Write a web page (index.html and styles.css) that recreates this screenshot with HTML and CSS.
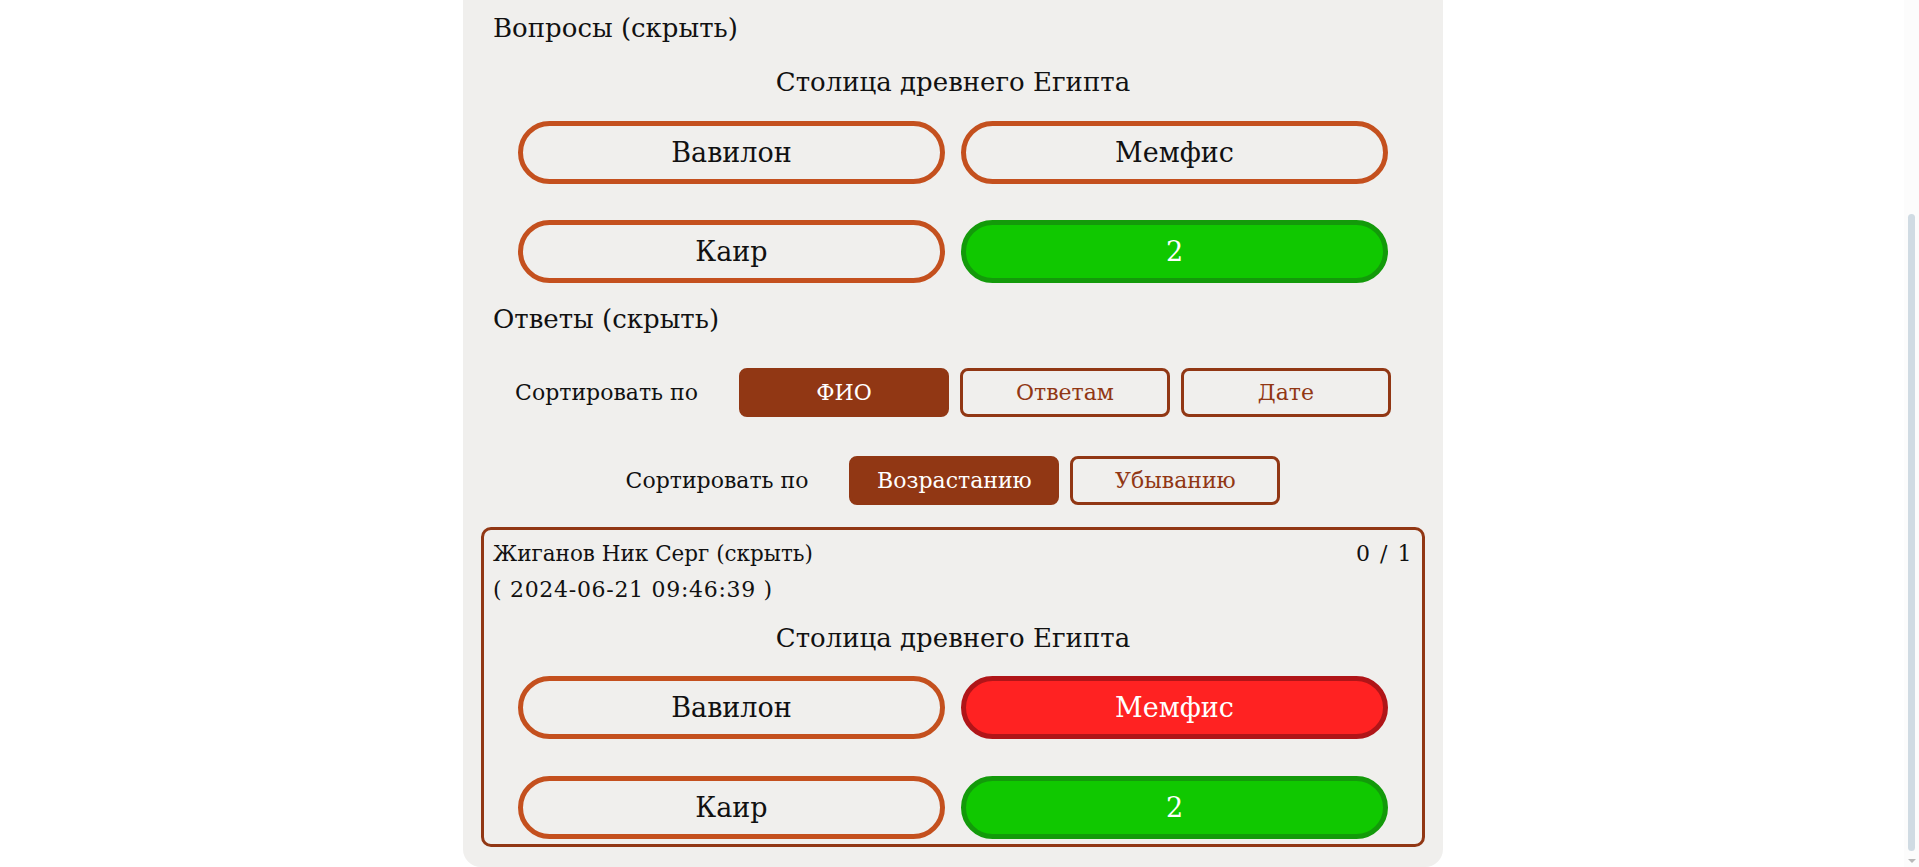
FILE: index.html
```html
<!DOCTYPE html>
<html lang="ru">
<head>
<meta charset="utf-8">
<title>Опрос</title>
<link rel="stylesheet" href="styles.css">
</head>
<body>
<main class="card">
  <div class="section-title">Вопросы <span class="toggle">(скрыть)</span></div>
  <div class="question">
    <div class="q-title">Столица древнего Египта</div>
    <div class="options">
      <div class="opt">Вавилон</div>
      <div class="opt">Мемфис</div>
      <div class="opt">Каир</div>
      <div class="opt opt-right">2</div>
    </div>
  </div>
  <div class="section-title answers-title">Ответы <span class="toggle">(скрыть)</span></div>
  <div class="sort-row sort-row-1">
    <span class="sort-label">Сортировать по</span>
    <button class="sort-btn active">ФИО</button>
    <button class="sort-btn">Ответам</button>
    <button class="sort-btn">Дате</button>
  </div>
  <div class="sort-row sort-row-2">
    <span class="sort-label">Сортировать по</span>
    <button class="sort-btn active">Возрастанию</button>
    <button class="sort-btn">Убыванию</button>
  </div>
  <section class="answer">
    <div class="answer-head">
      <span class="name">Жиганов Ник Серг <span class="toggle">(скрыть)</span></span>
      <span class="score">0 / 1</span>
    </div>
    <div class="answer-date">( 2024-06-21 09:46:39 )</div>
    <div class="question in-answer">
      <div class="q-title">Столица древнего Египта</div>
      <div class="options">
        <div class="opt">Вавилон</div>
        <div class="opt opt-wrong">Мемфис</div>
        <div class="opt">Каир</div>
        <div class="opt opt-right">2</div>
      </div>
    </div>
  </section>
</main>
<div class="scrollbar"><div class="thumb"></div><div class="arrow"></div></div>
</body>
</html>
```
FILE: styles.css
```css
html, body {
  margin: 0;
  padding: 0;
  background: #ffffff;
  height: 867px;
  overflow: hidden;
}
body {
  font-family: "DejaVu Serif", "Liberation Serif", serif;
  color: #111;
  padding-right: 13px;
}
.card {
  width: 944px;
  margin: 0 auto;
  background: #f0efed;
  border-radius: 0 0 18px 18px;
  padding: 10px 18px 20px;
  box-sizing: content-box;
}
.section-title {
  font-size: 26px;
  line-height: 36px;
  padding-left: 12px;
}
.answers-title {
  margin-top: 18px;
}
.question {
  margin-top: 18px;
}
.q-title {
  text-align: center;
  font-size: 26px;
  line-height: 36px;
}
.options {
  width: 870px;
  margin: 21px auto 0;
  display: grid;
  grid-template-columns: 1fr 1fr;
  column-gap: 16px;
  row-gap: 36px;
}
.opt {
  height: 63px;
  box-sizing: border-box;
  border: 5px solid #c4501e;
  border-radius: 32px;
  display: flex;
  align-items: center;
  justify-content: center;
  font-size: 27px;
  color: #111;
}
.opt-right {
  background: #10c800;
  border-color: #139a0a;
  color: #fff;
}
.opt-wrong {
  background: #ff2222;
  border-color: #b01518;
  color: #fff;
}
.sort-row {
  display: flex;
  justify-content: center;
  align-items: center;
  gap: 11px;
}
.sort-row-1 { margin-top: 31px; }
.sort-row-2 { margin-top: 39px; }
.sort-label {
  font-size: 22px;
  margin-right: 30px;
}
.sort-btn {
  width: 210px;
  height: 49px;
  box-sizing: border-box;
  border: 3px solid #913714;
  border-radius: 8px;
  background: transparent;
  color: #913714;
  font-family: inherit;
  font-size: 22px;
  padding: 0;
}
.sort-btn.active {
  background: #913714;
  color: #fff;
}
.answer {
  margin-top: 22px;
  border: 3px solid #913714;
  border-radius: 10px;
  padding: 6px 9px 5px;
}
.answer-head {
  display: flex;
  justify-content: space-between;
  font-size: 22px;
  line-height: 36px;
}
.name {
  font-size: 21.5px;
}
.score {
  letter-spacing: 1.5px;
}
.answer-date {
  font-size: 22px;
  line-height: 36px;
  letter-spacing: 0.7px;
}
.question.in-answer {
  margin-top: 12px;
}
.in-answer .options {
  margin-top: 20px;
  row-gap: 37px;
}
.scrollbar {
  position: fixed;
  top: 0;
  right: 0;
  width: 15px;
  height: 867px;
  background: #fcfcfc;
}
.thumb {
  position: absolute;
  left: 4px;
  top: 214px;
  width: 7px;
  height: 637px;
  border-radius: 4px;
  background: #d0dbe3;
}
.arrow {
  position: absolute;
  left: 4px;
  bottom: 4px;
  width: 0;
  height: 0;
  border-left: 4px solid transparent;
  border-right: 4px solid transparent;
  border-top: 4px solid #b8b8b8;
}
```
